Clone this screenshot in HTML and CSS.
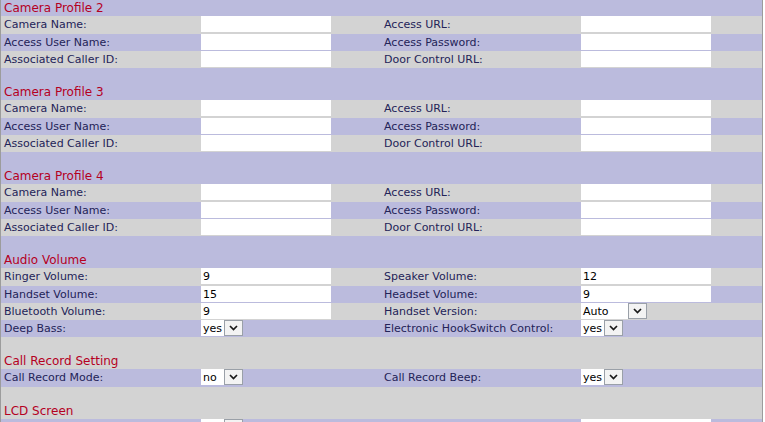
FILE: index.html
```html
<!DOCTYPE html>
<html>
<head>
<meta charset="utf-8">
<title>Phone Settings</title>
<link rel="stylesheet" href="styles.css">
</head>
<body>
<div class="page">
  <div class="hdr first lav"><span class="title">Camera Profile 2</span></div>
  <div class="row r1 gray"><span class="lbl">Camera Name:</span><span class="fld"><input class="inp" type="text" value=""></span><span></span><span class="lbl l2">Access URL:</span><span class="fld"><input class="inp" type="text" value=""></span><span></span></div>
  <div class="row lav"><span class="lbl">Access User Name:</span><span class="fld"><input class="inp" type="text" value=""></span><span></span><span class="lbl l2">Access Password:</span><span class="fld"><input class="inp" type="text" value=""></span><span></span></div>
  <div class="row gray"><span class="lbl">Associated Caller ID:</span><span class="fld"><input class="inp" type="text" value=""></span><span></span><span class="lbl l2">Door Control URL:</span><span class="fld"><input class="inp" type="text" value=""></span><span></span></div>

  <div class="hdr lav"><span class="title">Camera Profile 3</span></div>
  <div class="row r1 gray"><span class="lbl">Camera Name:</span><span class="fld"><input class="inp" type="text" value=""></span><span></span><span class="lbl l2">Access URL:</span><span class="fld"><input class="inp" type="text" value=""></span><span></span></div>
  <div class="row lav"><span class="lbl">Access User Name:</span><span class="fld"><input class="inp" type="text" value=""></span><span></span><span class="lbl l2">Access Password:</span><span class="fld"><input class="inp" type="text" value=""></span><span></span></div>
  <div class="row gray"><span class="lbl">Associated Caller ID:</span><span class="fld"><input class="inp" type="text" value=""></span><span></span><span class="lbl l2">Door Control URL:</span><span class="fld"><input class="inp" type="text" value=""></span><span></span></div>

  <div class="hdr lav"><span class="title">Camera Profile 4</span></div>
  <div class="row r1 gray"><span class="lbl">Camera Name:</span><span class="fld"><input class="inp" type="text" value=""></span><span></span><span class="lbl l2">Access URL:</span><span class="fld"><input class="inp" type="text" value=""></span><span></span></div>
  <div class="row lav"><span class="lbl">Access User Name:</span><span class="fld"><input class="inp" type="text" value=""></span><span></span><span class="lbl l2">Access Password:</span><span class="fld"><input class="inp" type="text" value=""></span><span></span></div>
  <div class="row gray"><span class="lbl">Associated Caller ID:</span><span class="fld"><input class="inp" type="text" value=""></span><span></span><span class="lbl l2">Door Control URL:</span><span class="fld"><input class="inp" type="text" value=""></span><span></span></div>

  <div class="hdr lav"><span class="title">Audio Volume</span></div>
  <div class="row r1 gray"><span class="lbl">Ringer Volume:</span><span class="fld"><input class="inp" type="text" value="9"></span><span></span><span class="lbl l2">Speaker Volume:</span><span class="fld"><input class="inp" type="text" value="12"></span><span></span></div>
  <div class="row lav"><span class="lbl">Handset Volume:</span><span class="fld"><input class="inp" type="text" value="15"></span><span></span><span class="lbl l2">Headset Volume:</span><span class="fld"><input class="inp" type="text" value="9"></span><span></span></div>
  <div class="row gray"><span class="lbl">Bluetooth Volume:</span><span class="fld"><input class="inp" type="text" value="9"></span><span></span><span class="lbl l2">Handset Version:</span><span class="fld"><span class="sel wide"><span class="sv">Auto</span><span class="sb"><svg width="9" height="6" viewBox="0 0 9 6"><path d="M1 1 L4.5 4.5 L8 1" fill="none" stroke="#1a1a1a" stroke-width="1.7"/></svg></span></span></span><span></span></div>
  <div class="row lav"><span class="lbl">Deep Bass:</span><span class="fld"><span class="sel"><span class="sv">yes</span><span class="sb"><svg width="9" height="6" viewBox="0 0 9 6"><path d="M1 1 L4.5 4.5 L8 1" fill="none" stroke="#1a1a1a" stroke-width="1.7"/></svg></span></span></span><span></span><span class="lbl l2">Electronic HookSwitch Control:</span><span class="fld"><span class="sel"><span class="sv">yes</span><span class="sb"><svg width="9" height="6" viewBox="0 0 9 6"><path d="M1 1 L4.5 4.5 L8 1" fill="none" stroke="#1a1a1a" stroke-width="1.7"/></svg></span></span></span><span></span></div>

  <div class="hdr gray"><span class="title">Call Record Setting</span></div>
  <div class="row r1 lav"><span class="lbl">Call Record Mode:</span><span class="fld"><span class="sel"><span class="sv">no</span><span class="sb"><svg width="9" height="6" viewBox="0 0 9 6"><path d="M1 1 L4.5 4.5 L8 1" fill="none" stroke="#1a1a1a" stroke-width="1.7"/></svg></span></span></span><span></span><span class="lbl l2">Call Record Beep:</span><span class="fld"><span class="sel"><span class="sv">yes</span><span class="sb"><svg width="9" height="6" viewBox="0 0 9 6"><path d="M1 1 L4.5 4.5 L8 1" fill="none" stroke="#1a1a1a" stroke-width="1.7"/></svg></span></span></span><span></span></div>

  <div class="hdr gray"><span class="title">LCD Screen</span></div>
  <div class="row r1 lav"><span class="lbl"></span><span class="fld"><span class="sel"><span class="sv"></span><span class="sb"></span></span></span><span></span><span class="lbl l2"></span><span class="fld"><input class="inp" type="text" value=""></span><span></span></div>
</div>
</body>
</html>
```

FILE: styles.css
```css
html, body {
  margin: 0;
  padding: 0;
  background: #ffffff;
}

body {
  font-family: "DejaVu Sans", Verdana, sans-serif;
  font-size: 11px;
  color: #232358;
  width: 765px;
  height: 422px;
  overflow: hidden;
}

.page {
  width: 761px;
  border-left: 1px solid #9c9c9c;
  border-right: 1px solid #9c9c9c;
}

.lav {
  background: #bbbbdd;
}

.gray {
  background: #d3d3d3;
}

.hdr {
  height: 32px;
  display: flex;
  align-items: flex-end;
}

.hdr.first {
  height: 16px;
}

.title {
  padding-left: 3px;
  font-size: 12px;
  line-height: 14px;
  color: #b5001f;
  margin-bottom: 1px;
}

.row {
  display: grid;
  grid-template-columns: 199px 131px 49px 200px 131px 1fr;
  height: 17px;
}

.row.r1 {
  height: 18px;
}

.lbl {
  padding-left: 3px;
  padding-top: 1px;
  line-height: 16px;
  white-space: nowrap;
}

.lbl.l2 {
  padding-left: 4px;
}

.fld {
  padding-left: 1px;
  display: flex;
  align-items: flex-start;
}

.inp {
  box-sizing: border-box;
  width: 130px;
  height: 16px;
  margin: 0;
  border: none;
  padding: 1px 2px 0;
  background: #ffffff;
  font-family: "DejaVu Sans", Verdana, sans-serif;
  font-size: 11px;
  line-height: 15px;
  color: #000000;
  outline: none;
}

.sel {
  display: inline-flex;
  width: 42px;
  height: 16px;
  background: #ffffff;
  color: #000000;
}

.sel.wide {
  width: 66px;
}

.sv {
  flex: 1;
  padding-left: 2px;
  padding-top: 1px;
  line-height: 15px;
}

.sb {
  width: 17px;
  height: 14px;
  border: 1px solid #9aa0a8;
  background: #f3f3f3;
  display: flex;
  align-items: center;
  justify-content: center;
}

.sb svg {
  display: block;
}
```
